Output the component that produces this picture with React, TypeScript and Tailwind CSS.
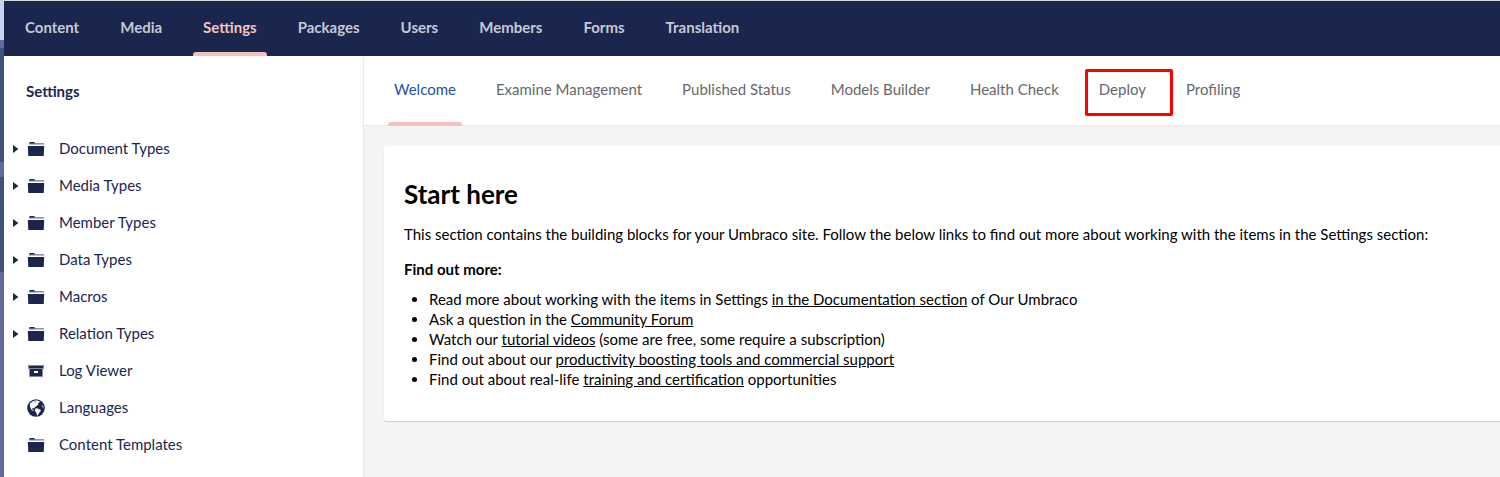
import React from "react";

const sections = ["Content", "Media", "Settings", "Packages", "Users", "Members", "Forms", "Translation"];

const dashboards = [
  "Welcome",
  "Examine Management",
  "Published Status",
  "Models Builder",
  "Health Check",
  "Deploy",
  "Profiling",
];

type IconName = "folder" | "box" | "globe";

const tree: { label: string; icon: IconName; expandable: boolean }[] = [
  { label: "Document Types", icon: "folder", expandable: true },
  { label: "Media Types", icon: "folder", expandable: true },
  { label: "Member Types", icon: "folder", expandable: true },
  { label: "Data Types", icon: "folder", expandable: true },
  { label: "Macros", icon: "folder", expandable: true },
  { label: "Relation Types", icon: "folder", expandable: true },
  { label: "Log Viewer", icon: "box", expandable: false },
  { label: "Languages", icon: "globe", expandable: false },
  { label: "Content Templates", icon: "folder", expandable: false },
];

const resources = [
  { before: "Read more about working with the items in Settings ", link: "in the Documentation section", after: " of Our Umbraco" },
  { before: "Ask a question in the ", link: "Community Forum", after: "" },
  { before: "Watch our ", link: "tutorial videos", after: " (some are free, some require a subscription)" },
  { before: "Find out about our ", link: "productivity boosting tools and commercial support", after: "" },
  { before: "Find out about real-life ", link: "training and certification", after: " opportunities" },
];

function TreeIcon({ name }: { name: IconName }) {
  if (name === "globe")
    return (
      <svg viewBox="0 0 18 18" className="size-[18px]" fill="currentColor" aria-hidden="true">
        <circle cx="9" cy="9" r="8.8" />
        <path
          fill="#fff"
          d="M3.2 4.2 5.2 2.4 8 1.4l2.4.1 2.4 1-.6 1.3-1.5.1.9 1.3-1.7 1.2-1.2 1.3-1.2.7-.4 1.3-1.2-.7-.9.7.9 1.3 1.3.5-.4.5-1.9-.8-1.2-1.8-.9-2.4.1-2z"
        />
        <path fill="#fff" d="M8.6 9.6l1.7-.3 1.5.7 2 .9-.5 1.8-1.3 1.3-.8 1.7-1.2 1-.5-2.4-1.2-1.9-.4-1.5z" />
        <path fill="#fff" d="M15.4 5.6l.9 1.7.2 2-1-.8-.7-1.5z" opacity="0.6" />
        <path d="M7.4 2.4l1.5-.2.2.9-1.2.7z" opacity="0.6" />
      </svg>
    );
  if (name === "box")
    return (
      <svg viewBox="0 0 18 18" className="size-[18px]" fill="currentColor" aria-hidden="true">
        <path d="M1 3h16v4H1zM2 7h14v8H2z" opacity="0.55" />
        <path d="M2 4h14v2H2z" />
        <path d="M3 7h12v7H3z" />
        <path fill="#fff" d="M7 9h4v2H7z" />
      </svg>
    );
  return (
    <svg viewBox="0 0 18 18" className="size-[18px]" fill="currentColor" aria-hidden="true">
      <path d="M2 3.4 2.8 2h4.4l.8 1.4z" />
      <path d="M2 3h15v1.6H2z" opacity="0.5" />
      <path d="M0.8 6h16.4l-.5 10H1.3z" />
    </svg>
  );
}

export default function App() {
  return (
    <div className="flex min-h-screen overflow-hidden bg-white font-['Lato',sans-serif] text-[15px] leading-5 text-[#1b264f]">
      <div className="flex w-1 shrink-0 flex-col" aria-hidden="true">
        <div className="h-10 bg-[#c8d3f0]" />
        <div className="h-2 bg-[#5f6c9e]" />
        <div className="h-[114px] bg-[#40527b]" />
        <div className="h-[15px] bg-[#5f6b9a]" />
        <div className="h-[95px] bg-[#40527b]" />
        <div className="grow bg-[#5f6b9a]" />
      </div>

      <div className="flex min-w-0 grow flex-col">
        <header className="h-14 shrink-0 border-t border-[#d5d9dc] bg-[#1b264f]">
          <nav className="h-full" aria-label="Sections">
            <ul className="flex h-full gap-px pl-px">
              {sections.map((name) => {
                const active = name === "Settings";
                return (
                  <li key={name} className="relative h-full">
                    <a
                      href="#"
                      aria-current={active ? "page" : undefined}
                      className={`flex h-full items-center px-5 pb-1 font-bold whitespace-nowrap ${active ? "text-[#f5c1bc]" : "text-[#c6c9d3]"}`}
                    >
                      {name}
                    </a>
                    {active && <span className="absolute inset-x-2.5 bottom-0 h-1 rounded-t-[3px] bg-[#f5c1bc]" />}
                  </li>
                );
              })}
            </ul>
          </nav>
        </header>

        <div className="flex grow">
          <aside className="w-[360px] shrink-0 border-r border-[#e9e9eb]">
            <h2 className="flex h-[70px] items-center px-[22px] font-bold">Settings</h2>
            <ul className="pt-1">
              {tree.map((item) => (
                <li key={item.label} className="flex h-[37px] items-center pl-2">
                  <span className="flex w-[15px] shrink-0">
                    {item.expandable && (
                      <button type="button" aria-label={`Expand ${item.label}`}>
                        <svg viewBox="0 0 6 8" className="ml-px h-2 w-1.5" fill="currentColor" aria-hidden="true">
                          <path d="M0 0l5.4 4L0 8z" />
                        </svg>
                      </button>
                    )}
                  </span>
                  <a href="#" className="flex items-center gap-3.5">
                    <TreeIcon name={item.icon} />
                    <span className="pb-0.5">{item.label}</span>
                  </a>
                </li>
              ))}
            </ul>
          </aside>

          <main className="flex min-w-0 grow flex-col bg-[#f5f3f4]">
            <nav className="h-[70px] shrink-0 border-b border-[#e9e9eb] bg-white" aria-label="Dashboards">
              <ul className="flex h-full pl-2.5">
                {dashboards.map((name) => {
                  const active = name === "Welcome";
                  return (
                    <li key={name} className="relative h-full">
                      <a
                        href="#"
                        aria-current={active ? "page" : undefined}
                        className={`flex h-full items-center px-5 pb-1 whitespace-nowrap ${active ? "text-[#2152a3]" : "text-[#68676b]"}`}
                      >
                        {name}
                      </a>
                      {active && <span className="absolute inset-x-3.5 -bottom-px h-1 rounded-t-[3px] bg-[#f5c1bc]" />}
                      {name === "Deploy" && (
                        <span className="pointer-events-none absolute top-[13px] -right-[7px] left-1.5 h-[47px] rounded-xs border-3 border-[#fe0000]" />
                      )}
                    </li>
                  );
                })}
              </ul>
            </nav>

            <div className="pt-5 pl-5">
              <section className="rounded-l-[3px] bg-white px-5 pt-[30px] pb-8 text-black shadow-[0_1px_1px_rgba(0,0,0,0.16)]">
                <h1 className="text-[26px] leading-9 font-bold">Start here</h1>
                <p className="mt-3">
                  This section contains the building blocks for your Umbraco site. Follow the below links to find out more
                  about working with the items in the Settings section:
                </p>
                <h2 className="mt-[15px] font-bold">Find out more:</h2>
                <ul className="mt-2.5 list-disc pl-[25px]">
                  {resources.map((r) => (
                    <li key={r.link}>
                      {r.before}
                      <a href="#" className="underline">
                        {r.link}
                      </a>
                      {r.after}
                    </li>
                  ))}
                </ul>
              </section>
            </div>
          </main>
        </div>
      </div>
    </div>
  );
}
